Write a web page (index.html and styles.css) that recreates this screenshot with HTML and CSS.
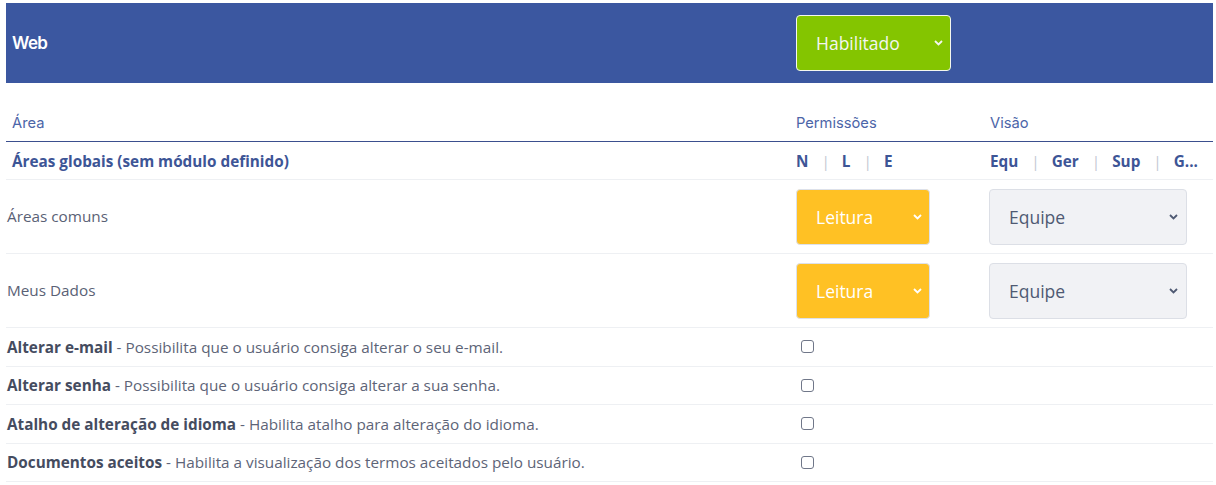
FILE: index.html
```html
<!DOCTYPE html>
<html lang="pt">
<head>
<meta charset="utf-8">
<link rel="stylesheet" href="styles.css">
</head>
<body>
<div class="page">
  <div class="band grid">
    <div class="band-title">Web</div>
    <div class="cell-pad">
      <div class="select select-green">
        <span>Habilitado</span>
        <svg class="chev" width="9" height="6" viewBox="0 0 9 6"><path d="M1 1l3.5 3.5L8 1" fill="none" stroke="currentColor" stroke-width="1.8"/></svg>
      </div>
    </div>
    <div></div>
  </div>

  <div class="colhead grid">
    <div class="cell-pad">Área</div>
    <div class="cell-pad">Permissões</div>
    <div class="cell-pad">Visão</div>
  </div>

  <div class="group grid">
    <div class="cell-pad">Áreas globais (sem módulo definido)</div>
    <div class="cell-pad opts">
      <span>N</span><span class="sep">|</span><span>L</span><span class="sep">|</span><span>E</span>
    </div>
    <div class="cell-pad opts">
      <span>Equ</span><span class="sep">|</span><span>Ger</span><span class="sep">|</span><span>Sup</span><span class="sep">|</span><span>G...</span>
    </div>
  </div>

  <div class="srow grid">
    <div class="label">Áreas comuns</div>
    <div class="cell-pad">
      <div class="select select-yellow select-perm">
        <span>Leitura</span>
        <svg class="chev" width="9" height="6" viewBox="0 0 9 6"><path d="M1 1l3.5 3.5L8 1" fill="none" stroke="currentColor" stroke-width="1.8"/></svg>
      </div>
    </div>
    <div class="cell-vis">
      <div class="select select-gray">
        <span>Equipe</span>
        <svg class="chev" width="9" height="6" viewBox="0 0 9 6"><path d="M1 1l3.5 3.5L8 1" fill="none" stroke="currentColor" stroke-width="1.8"/></svg>
      </div>
    </div>
  </div>

  <div class="srow grid">
    <div class="label">Meus Dados</div>
    <div class="cell-pad">
      <div class="select select-yellow select-perm">
        <span>Leitura</span>
        <svg class="chev" width="9" height="6" viewBox="0 0 9 6"><path d="M1 1l3.5 3.5L8 1" fill="none" stroke="currentColor" stroke-width="1.8"/></svg>
      </div>
    </div>
    <div class="cell-vis">
      <div class="select select-gray">
        <span>Equipe</span>
        <svg class="chev" width="9" height="6" viewBox="0 0 9 6"><path d="M1 1l3.5 3.5L8 1" fill="none" stroke="currentColor" stroke-width="1.8"/></svg>
      </div>
    </div>
  </div>

  <div class="crow grid">
    <div class="label"><b>Alterar e-mail</b> - Possibilita que o usuário consiga alterar o seu e-mail.</div>
    <div class="cell-pad"><span class="check"></span></div>
    <div></div>
  </div>
  <div class="crow grid">
    <div class="label"><b>Alterar senha</b> - Possibilita que o usuário consiga alterar a sua senha.</div>
    <div class="cell-pad"><span class="check"></span></div>
    <div></div>
  </div>
  <div class="crow grid">
    <div class="label"><b>Atalho de alteração de idioma</b> - Habilita atalho para alteração do idioma.</div>
    <div class="cell-pad"><span class="check"></span></div>
    <div></div>
  </div>
  <div class="crow grid">
    <div class="label"><b>Documentos aceitos</b> - Habilita a visualização dos termos aceitados pelo usuário.</div>
    <div class="cell-pad"><span class="check"></span></div>
    <div></div>
  </div>
</div>
</body>
</html>
```

FILE: styles.css
```css
* { box-sizing: border-box; }
html, body { margin: 0; padding: 0; background: #ffffff; }
body { font-family: "Open Sans", "Liberation Sans", sans-serif; }

.page { padding: 3px 3px 0 6px; }

.grid {
  display: grid;
  grid-template-columns: 784px 194px 1fr;
}

.cell-pad { padding-left: 6px; }

/* Top band */
.band {
  background: #3b57a0;
  height: 80px;
  align-items: center;
}
.band-title {
  padding-left: 6px;
  font-family: "Inter", "Liberation Sans", sans-serif;
  font-weight: 600;
  font-size: 17px;
  letter-spacing: -0.6px;
  color: #ffffff;
}

/* Select-like controls */
.select {
  display: flex;
  align-items: center;
  justify-content: space-between;
  height: 56px;
  border-radius: 4px;
  padding: 0 7px 0 19px;
  font-size: 17.5px;
}
.select-green {
  width: 155px;
  background: #84c500;
  border: 1px solid #f4f7ef;
  color: #f4f6f0;
}
.select-yellow {
  background: #ffc124;
  border: 1px solid #dde1ea;
  color: #ffffff;
}
.select-perm { width: 134px; }
.select-gray {
  width: 198px;
  background: #f1f2f5;
  border: 1px solid #dcdfe6;
  color: #4f5a73;
  padding-right: 8px;
}
.chev { display: block; }

/* Column header */
.colhead {
  height: 59px;
  align-items: end;
  padding-bottom: 8px;
  border-bottom: 1px solid #3b4f8e;
  font-family: "Inter", "Liberation Sans", sans-serif;
  font-size: 14.7px;
  color: #4c65a8;
  line-height: 20px;
}

/* Group row */
.group {
  height: 38px;
  align-items: center;
  border-bottom: 1px solid #eef0f3;
  font-size: 15.3px;
  font-weight: 700;
  color: #3d5596;
  line-height: 20px;
}
.opts { display: flex; align-items: center; white-space: nowrap; }
.sep {
  color: #c3c8d2;
  font-weight: 400;
  padding: 0 12px 0 13px;
}

.label { padding-left: 1px; }

/* Select rows */
.srow {
  height: 74px;
  align-items: start;
  padding-top: 9px;
  border-bottom: 1px solid #eef0f3;
}
.srow .label {
  align-self: stretch;
  display: flex;
  align-items: center;
  padding-bottom: 11px;
  font-size: 15.3px;
  color: #5a6175;
}
.cell-vis { padding-left: 5px; }

/* Checkbox rows */
.crow {
  height: 38.5px;
  align-items: center;
  border-bottom: 1px solid #eef0f3;
  font-size: 15.3px;
  color: #5d6477;
  line-height: 20px;
}
.crow b { color: #454c5f; font-weight: 700; }
.check {
  display: block;
  width: 13px;
  height: 13px;
  margin-left: 5px;
  border: 1.5px solid #707789;
  border-radius: 3px;
  background: #fff;
}
```
